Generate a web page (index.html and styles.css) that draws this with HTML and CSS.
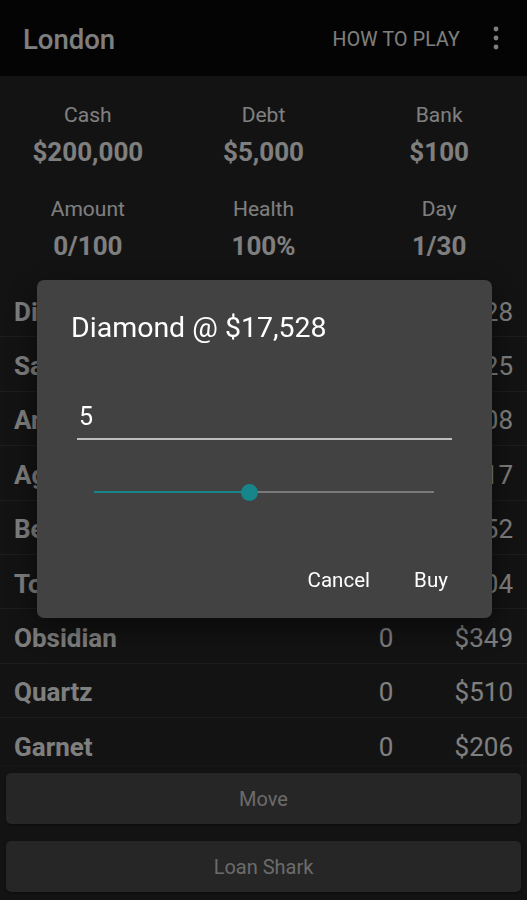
FILE: index.html
```html
<!DOCTYPE html>
<html lang="en">
<head>
<meta charset="utf-8">
<title>London</title>
<link rel="stylesheet" href="styles.css">
</head>
<body>
<div class="app">
  <header class="topbar">
    <div class="city">London</div>
    <div class="actions">
      <span class="howto">HOW TO PLAY</span>
      <svg class="more" width="8" height="26" viewBox="0 0 8 26" aria-hidden="true">
        <circle cx="4" cy="4" r="2.4"/>
        <circle cx="4" cy="13" r="2.4"/>
        <circle cx="4" cy="22" r="2.4"/>
      </svg>
    </div>
  </header>

  <section class="stats">
    <div class="stat"><div class="label">Cash</div><div class="value">$200,000</div></div>
    <div class="stat"><div class="label">Debt</div><div class="value">$5,000</div></div>
    <div class="stat"><div class="label">Bank</div><div class="value">$100</div></div>
    <div class="stat"><div class="label">Amount</div><div class="value">0/100</div></div>
    <div class="stat"><div class="label">Health</div><div class="value">100%</div></div>
    <div class="stat"><div class="label">Day</div><div class="value">1/30</div></div>
  </section>

  <ul class="items">
    <li class="item"><span class="name">Diamond</span><span class="qty">0</span><span class="price">$17,528</span></li>
    <li class="item"><span class="name">Sapphire</span><span class="qty">0</span><span class="price">$8,125</span></li>
    <li class="item"><span class="name">Amethyst</span><span class="qty">0</span><span class="price">$2,108</span></li>
    <li class="item"><span class="name">Agate</span><span class="qty">0</span><span class="price">$1,417</span></li>
    <li class="item"><span class="name">Beryl</span><span class="qty">0</span><span class="price">$952</span></li>
    <li class="item"><span class="name">Topaz</span><span class="qty">0</span><span class="price">$804</span></li>
    <li class="item"><span class="name">Obsidian</span><span class="qty">0</span><span class="price">$349</span></li>
    <li class="item"><span class="name">Quartz</span><span class="qty">0</span><span class="price">$510</span></li>
    <li class="item"><span class="name">Garnet</span><span class="qty">0</span><span class="price">$206</span></li>
  </ul>

  <footer class="footer">
    <button class="wide-btn">Move</button>
    <button class="wide-btn">Loan Shark</button>
  </footer>
</div>

<div class="scrim"></div>

<div class="dialog" role="dialog">
  <h2 class="dialog-title">Diamond @ $17,528</h2>
  <div class="field"><span class="field-text">5</span></div>
  <div class="slider">
    <div class="track"><div class="track-active" style="width:45.7%"></div></div>
    <div class="thumb" style="left:45.7%"></div>
  </div>
  <div class="dialog-actions">
    <button class="text-btn">Cancel</button>
    <button class="text-btn">Buy</button>
  </div>
</div>
</body>
</html>
```

FILE: styles.css
```css
* { box-sizing: border-box; }

html, body {
  margin: 0;
  padding: 0;
  height: 900px;
  overflow: hidden;
  background: #262626;
  font-family: Roboto, "Liberation Sans", sans-serif;
  color: #ffffff;
}

.app {
  height: 900px;
  display: flex;
  flex-direction: column;
}

.topbar {
  height: 76px;
  flex: none;
  background: #080808;
  display: flex;
  align-items: center;
  justify-content: space-between;
  padding: 2px 27px 0 23px;
}

.city {
  font-size: 27.5px;
  font-weight: 500;
}

.actions {
  display: flex;
  align-items: center;
  gap: 32px;
}

.howto {
  font-size: 19.5px;
  font-weight: 400;
  letter-spacing: 0.2px;
}

.more { fill: #ffffff; display: block; margin-top: -3px; }

.stats {
  flex: none;
  height: 207px;
  display: grid;
  grid-template-columns: repeat(3, 1fr);
  row-gap: 20px;
  padding: 24px 0 0;
  align-content: start;
}

.stat {
  text-align: center;
  display: flex;
  flex-direction: column;
  align-items: center;
}

.label {
  font-size: 21px;
  line-height: 30px;
}

.value {
  font-size: 26px;
  line-height: 44px;
  font-weight: 700;
}

.items {
  list-style: none;
  margin: 0;
  padding: 0;
  flex: 1;
  overflow: hidden;
  border-bottom: 1px solid #2e2e2e;
}

.item {
  height: 54.4px;
  border-bottom: 1px solid #3a3a3a;
  display: grid;
  grid-template-columns: 1fr 40px 107px;
  align-items: center;
  padding: 4px 14px 0;
  font-size: 26px;
}

.name { font-weight: 700; }
.qty { text-align: center; }
.price { text-align: right; }

.footer {
  flex: none;
  height: 134px;
  display: flex;
  flex-direction: column;
  gap: 17px;
  padding: 7px 6px 8px;
}

.wide-btn {
  height: 51px;
  border: none;
  border-radius: 5px;
  background: #4c4c4c;
  color: #d6d6d6;
  font-family: inherit;
  font-size: 20px;
  font-weight: 400;
  padding-top: 2px;
  box-shadow: 0 1px 2px rgba(0, 0, 0, 0.4);
}

.scrim {
  position: fixed;
  inset: 0;
  background: rgba(0, 0, 0, 0.5);
}

.dialog {
  position: fixed;
  left: 37px;
  top: 280px;
  width: 455px;
  height: 338px;
  background: #424242;
  border-radius: 7px;
  box-shadow: 0 10px 30px rgba(0, 0, 0, 0.5);
  padding: 32px 0 18px;
  display: flex;
  flex-direction: column;
}

.dialog-title {
  margin: 0 0 0 34px;
  font-size: 28.5px;
  line-height: 32px;
  font-weight: 400;
  color: #ffffff;
}

.field {
  margin: 56px 40px 0;
  height: 40px;
  border-bottom: 2px solid #bdbdbd;
  padding-left: 2px;
}

.field-text {
  display: block;
  font-size: 25px;
  line-height: 34px;
}

.slider {
  position: relative;
  margin: 42px 58px 0 57px;
  height: 20px;
  display: flex;
  align-items: center;
}

.track {
  width: 100%;
  height: 2px;
  background: #7a7a7a;
}

.track-active {
  height: 100%;
  background: #16858a;
}

.thumb {
  position: absolute;
  top: 2px;
  width: 17px;
  height: 17px;
  margin-left: -8.5px;
  border-radius: 50%;
  background: #16868a;
}

.dialog-actions {
  margin-top: 58px;
  height: 40px;
  display: flex;
  justify-content: flex-end;
  gap: 10px;
  padding-right: 20px;
}

.text-btn {
  min-width: 82px;
  height: 40px;
  padding: 0 10px;
  border: none;
  background: transparent;
  color: #ffffff;
  font-family: inherit;
  font-size: 20.5px;
  font-weight: 400;
}
```
